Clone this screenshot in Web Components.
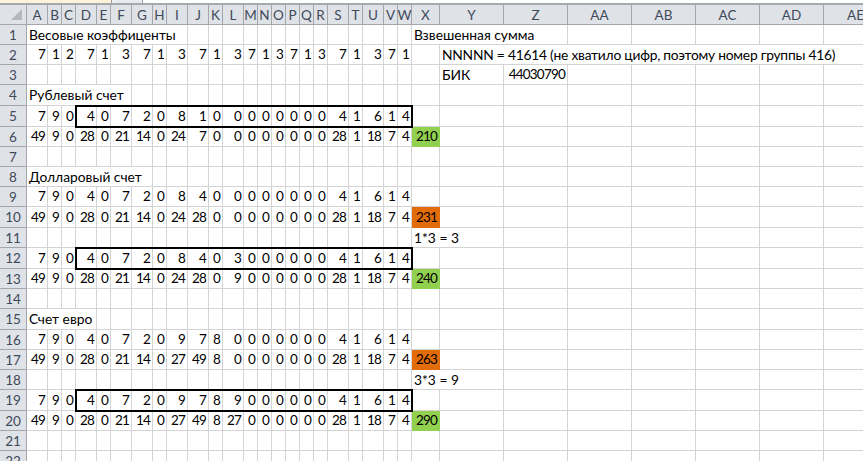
<!DOCTYPE html>
<html lang="ru">
<head>
<meta charset="utf-8">
<title>Весовые коэффициенты</title>
<style>
    html, body { margin: 0; height: 100%; background: #fff; overflow: hidden; }
</style>
</head>
<body>
<xl-window>
    <xl-strip slot="strip"></xl-strip>
    <xl-sheet></xl-sheet>
</xl-window>

<script>
const COLS = [
    ["A", 21], ["B", 14], ["C", 14], ["D", 21], ["E", 14], ["F", 21], ["G", 21], ["H", 14],
    ["I", 21], ["J", 21], ["K", 14], ["L", 21], ["M", 14], ["N", 14], ["O", 14], ["P", 14],
    ["Q", 14], ["R", 14], ["S", 21], ["T", 14], ["U", 21], ["V", 14], ["W", 14], ["X", 28],
    ["Y", 64], ["Z", 64], ["AA", 64], ["AB", 64], ["AC", 64], ["AD", 64], ["AE", 64],
];
const ROW_HEIGHTS = [20, 20, 20, 21, 21, 20, 20, 20, 20, 21, 20, 21, 20, 20, 21, 20, 20, 20, 21, 20, 20, 20];

const digits = (s) => s.split(" ");

// row number -> numbers from column A on
const NUMBERS = {
    2: digits("7 1 2 7 1 3 7 1 3 7 1 3 7 1 3 7 1 3 7 1 3 7 1"),
    5: digits("7 9 0 4 0 7 2 0 8 1 0 0 0 0 0 0 0 0 4 1 6 1 4"),
    6: digits("49 9 0 28 0 21 14 0 24 7 0 0 0 0 0 0 0 0 28 1 18 7 4"),
    9: digits("7 9 0 4 0 7 2 0 8 4 0 0 0 0 0 0 0 0 4 1 6 1 4"),
    10: digits("49 9 0 28 0 21 14 0 24 28 0 0 0 0 0 0 0 0 28 1 18 7 4"),
    12: digits("7 9 0 4 0 7 2 0 8 4 0 3 0 0 0 0 0 0 4 1 6 1 4"),
    13: digits("49 9 0 28 0 21 14 0 24 28 0 9 0 0 0 0 0 0 28 1 18 7 4"),
    16: digits("7 9 0 4 0 7 2 0 9 7 8 0 0 0 0 0 0 0 4 1 6 1 4"),
    17: digits("49 9 0 28 0 21 14 0 27 49 8 0 0 0 0 0 0 0 28 1 18 7 4"),
    19: digits("7 9 0 4 0 7 2 0 9 7 8 9 0 0 0 0 0 0 4 1 6 1 4"),
    20: digits("49 9 0 28 0 21 14 0 27 49 8 27 0 0 0 0 0 0 28 1 18 7 4"),
};

// text that runs over its neighbours: [row, first column, span, text, letter spacing]
const LABELS = [
    [1, 0, 9, "Весовые коэффиценты"],
    [1, 23, 3, "Взвешенная сумма"],
    [2, 24, 7, "NNNNN = 41614 (не хватило цифр, поэтому номер группы 416)", "-0.23px"],
    [3, 24, 1, "БИК"],
    [4, 0, 6, "Рублевый счет"],
    [8, 0, 7, "Долларовый счет"],
    [11, 23, 2, "1*3 = 3"],
    [15, 0, 4, "Счет евро"],
    [18, 23, 2, "3*3 = 9"],
];

const TOTALS = { 6: ["210", "#92d050"], 10: ["231", "#e26b0a"], 13: ["240", "#92d050"], 17: ["263", "#e26b0a"], 20: ["290", "#92d050"] };
const BOXES = [5, 12, 19];

class XlWindow extends HTMLElement {
    constructor() {
        super();
        this.attachShadow({ mode: "open" });
        this.shadowRoot.innerHTML = `
            <style>
                :host {
                    display: flex;
                    flex-direction: column;
                    width: 863px;
                    height: 461px;
                    overflow: hidden;
                    font-family: "Lato", "Open Sans", sans-serif;
                }
            </style>
            <slot name="strip"></slot>
            <slot></slot>`;
    }
}

// what is left of the formula bar above the sheet
class XlStrip extends HTMLElement {
    constructor() {
        super();
        this.attachShadow({ mode: "open" });
        this.shadowRoot.innerHTML = `
            <style>
                :host {
                    display: flex;
                    flex: none;
                    height: 5px;
                    box-sizing: border-box;
                    border-bottom: 2px solid #a6a8ab;
                    background: #fff;
                }
                .name { width: 111px; background: #fff3d9; }
                .gap { width: 4px; border-left: 1px solid #9c9c9c; box-sizing: border-box; background: #f0f0f0; }
                .box { width: 27px; background: #e9ebf0; border-right: 1px solid #9c9c9c; }
            </style>
            <div class="name"></div><div class="gap"></div><div class="box"></div>`;
    }
}

class XlCell extends HTMLElement {
    constructor() {
        super();
        this.attachShadow({ mode: "open" });
        this.shadowRoot.innerHTML = `
            <style>
                :host {
                    display: flex;
                    align-items: center;
                    box-sizing: border-box;
                    min-width: 0;
                    padding: 0 2px;
                    white-space: nowrap;
                    font-size: 13.8px;
                    line-height: 1;
                    color: #000;
                    border-right: 1px solid #d4d4d4;
                    border-bottom: 1px solid #d4d4d4;
                }
                :host([num]) {
                    justify-content: flex-end;
                    padding: 1px 2px 0 0;
                    font-size: 13.5px;
                    letter-spacing: -0.8px;
                }
                :host([head]) {
                    justify-content: center;
                    padding: 2px 0 0;
                    font-size: 13.5px;
                    color: #3e4a5a;
                    background: #dfe2e7;
                    border-right-color: #a3a6ab;
                    border-bottom-color: #a3a6ab;
                }
            </style>
            <slot></slot>`;
    }
}

class XlSheet extends HTMLElement {
    constructor() {
        super();
        this.attachShadow({ mode: "open" });
        const cols = COLS.map((c) => c[1] + "px").join(" ");
        const rows = ROW_HEIGHTS.map((h) => h + "px").join(" ");
        this.shadowRoot.innerHTML = `
            <style>
                :host { display: block; flex: none; }
                #grid {
                    display: grid;
                    grid-template-columns: 27px ${cols};
                    grid-template-rows: 20px ${rows};
                }
                .corner { display: block; background: #dfe2e7; border-right: 1px solid #a3a6ab; border-bottom: 1px solid #a3a6ab; box-sizing: border-box; }
                .corner svg { display: block; }
                .box { border: 2px solid #000; margin: -1px; pointer-events: none; z-index: 2; }
            </style>
            <div id="grid"></div>`;
    }

    connectedCallback() {
        const grid = this.shadowRoot.getElementById("grid");

        const corner = document.createElement("div");
        corner.className = "corner";
        corner.innerHTML = `<svg width="26" height="19" viewBox="0 0 26 19"><polygon points="22,4 22,15 11,15" fill="#b4b7bb"/></svg>`;
        grid.append(corner);

        COLS.forEach((c, i) => grid.append(this.cell(1, i + 2, 1, c[0], { head: true })));

        const taken = new Set();
        LABELS.forEach(([row, col, span]) => {
            for (let i = 0; i < span; i++) taken.add(row + ":" + (col + i));
        });

        ROW_HEIGHTS.forEach((h, r) => {
            const row = r + 1;
            grid.append(this.cell(row + 1, 1, 1, String(row), { head: true }));
            const values = NUMBERS[row] || [];
            COLS.forEach((c, i) => {
                if (taken.has(row + ":" + i)) return;
                if (i === 23 && TOTALS[row]) return;
                if (row === 3 && i === 25) {
                    grid.append(this.cell(row + 1, i + 2, 1, "44030790", { num: true }));
                    return;
                }
                grid.append(this.cell(row + 1, i + 2, 1, values[i] || "", { num: true }));
            });
            if (TOTALS[row]) {
                const total = this.cell(row + 1, 25, 1, TOTALS[row][0], { num: true });
                total.style.background = TOTALS[row][1];
                total.style.borderColor = TOTALS[row][1];
                grid.append(total);
            }
        });

        LABELS.forEach(([row, col, span, text, spacing]) => {
            const label = this.cell(row + 1, col + 2, span, text, {});
            if (spacing) label.style.letterSpacing = spacing;
            grid.append(label);
        });

        // thick outline round D:W of the account rows
        BOXES.forEach((row) => {
            const box = document.createElement("div");
            box.className = "box";
            box.style.gridRow = row + 1;
            box.style.gridColumn = "5 / 25";
            grid.append(box);
        });
    }

    cell(row, col, span, text, opts) {
        const el = document.createElement("xl-cell");
        el.style.gridRow = row;
        el.style.gridColumn = col + " / span " + span;
        if (opts.head) el.setAttribute("head", "");
        if (opts.num) el.setAttribute("num", "");
        el.textContent = text;
        return el;
    }
}

customElements.define("xl-window", XlWindow);
customElements.define("xl-strip", XlStrip);
customElements.define("xl-cell", XlCell);
customElements.define("xl-sheet", XlSheet);
</script>
</body>
</html>
